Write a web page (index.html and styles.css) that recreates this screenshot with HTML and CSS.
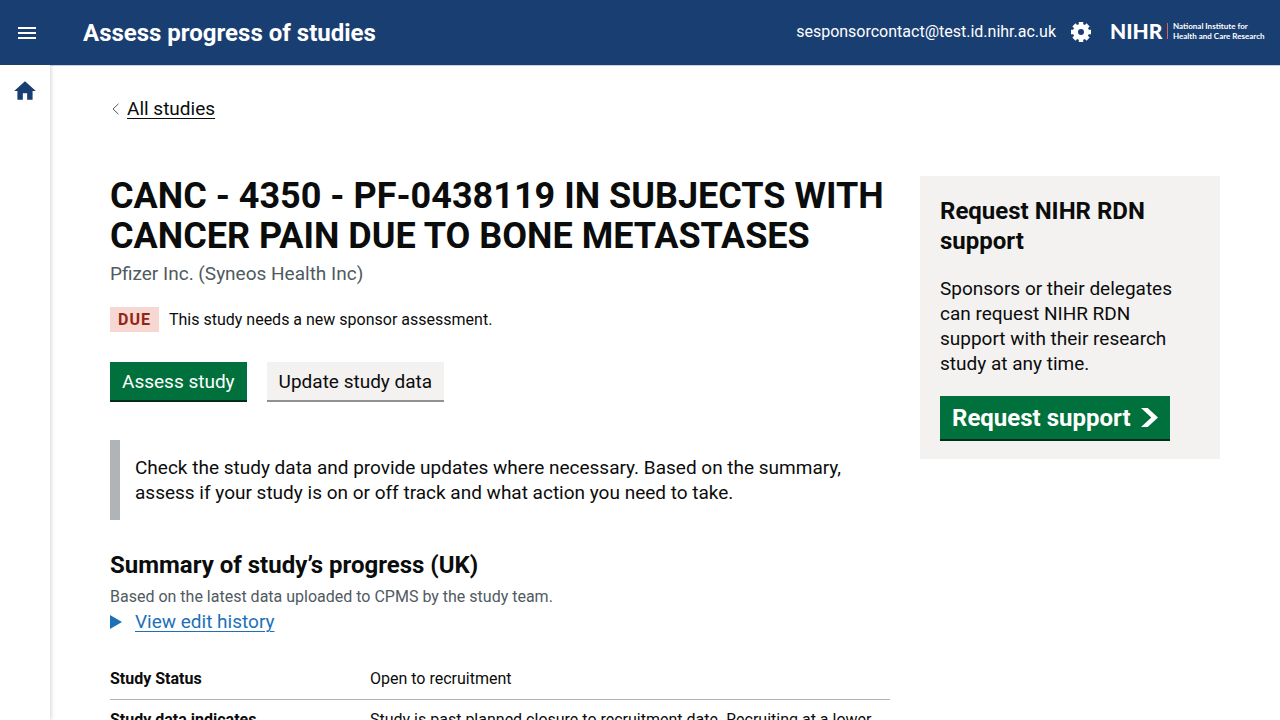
FILE: index.html
```html
<!DOCTYPE html>
<html lang="en">
<head>
<meta charset="utf-8">
<meta name="viewport" content="width=device-width, initial-scale=1">
<title>Assess progress of studies</title>
<link rel="stylesheet" href="styles.css">
</head>
<body>
<header class="header">
  <button class="menu-button" type="button" aria-label="Open navigation">
    <svg width="24" height="24" viewBox="0 0 24 24" fill="currentColor" aria-hidden="true"><path d="M3 18h18v-2H3v2zm0-5h18v-2H3v2zm0-7v2h18V6H3z"/></svg>
  </button>
  <div class="header-title">Assess progress of studies</div>
  <div class="header-account">
    <span class="header-email">sesponsorcontact@test.id.nihr.ac.uk</span>
    <button class="settings-button" type="button" aria-label="Settings">
      <svg width="24" height="24" viewBox="0 0 24 24" fill="none" stroke="currentColor" aria-hidden="true">
        <circle cx="12" cy="12" r="5.5" stroke-width="5"/>
        <path stroke-width="4.4" d="M12 2v3M12 19v3M2 12h3M19 12h3M4.900 4.900l2.100 2.100M17 17l2.100 2.100M4.900 19.100L7 17M17 7l2.100-2.100"/>
      </svg>
    </button>
    <a class="logo" href="#" aria-label="NIHR">
      <svg class="logo-image" width="156" height="20" viewBox="0 0 156 20" aria-hidden="true">
        <text class="logo-name" x="0" y="17">NIHR</text>
        <path d="M57 1h1v16h-1z" fill="#ea5d4e"/>
        <text class="logo-line" x="63" y="7">National Institute for</text>
        <text class="logo-line" x="63" y="17">Health and Care Research</text>
      </svg>
    </a>
  </div>
</header>
<div class="shell">
  <nav class="sidebar" aria-label="Main">
    <a class="home-link" href="#" aria-label="Home">
      <svg width="26" height="26" viewBox="0 0 24 24" fill="currentColor" aria-hidden="true"><path d="M10 20v-6h4v6h5v-8h3L12 3 2 12h3v8z"/></svg>
    </a>
  </nav>
  <div class="page">
    <div class="back">
      <svg width="7" height="12" viewBox="0 0 7 12" fill="none" stroke="#505a5f" aria-hidden="true"><path d="M6.500 .8L1 6l5.500 5.200"/></svg>
      <a class="back-link" href="#">All studies</a>
    </div>
    <div class="columns">
      <main>
        <h1 class="title">CANC - 4350 - PF-0438119 IN SUBJECTS WITH CANCER PAIN DUE TO BONE METASTASES</h1>
        <p class="organisation">Pfizer Inc. (Syneos Health Inc)</p>
        <div class="status"><strong class="tag">DUE</strong><span>This study needs a new sponsor assessment.</span></div>
        <div class="actions">
          <button class="button" type="button">Assess study</button>
          <button class="button button-secondary" type="button">Update study data</button>
        </div>
        <p class="inset">Check the study data and provide updates where necessary. Based on the summary, assess if your study is on or off track and what action you need to take.</p>
        <h2 class="heading">Summary of study’s progress (UK)</h2>
        <p class="hint">Based on the latest data uploaded to CPMS by the study team.</p>
        <details class="history">
          <summary class="history-summary">
            <svg width="12" height="14" viewBox="0 0 12 14" fill="currentColor" aria-hidden="true"><path d="M0 0l12 7-12 7z"/></svg>
            <span class="history-text">View edit history</span>
          </summary>
        </details>
        <table class="summary-table">
          <tbody>
            <tr><th scope="row">Study Status</th><td>Open to recruitment</td></tr>
            <tr><th scope="row">Study data indicates</th><td>Study is past planned closure to recruitment date. Recruiting at a lower</td></tr>
          </tbody>
        </table>
      </main>
      <aside class="support">
        <h2 class="heading">Request NIHR RDN support</h2>
        <p class="support-text">Sponsors or their delegates can request NIHR RDN support with their research study at any time.</p>
        <a class="button button-start" href="#">Request support
          <svg width="17" height="19" viewBox="0 0 33 40" preserveAspectRatio="none" fill="currentColor" aria-hidden="true"><path d="M0 0h13l20 20-20 20H0l20-20z"/></svg>
        </a>
      </aside>
    </div>
  </div>
</div>
</body>
</html>
```

FILE: styles.css
```css
* { box-sizing: border-box; }
html, body { height: 100%; }
body {
  margin: 0;
  display: flex;
  flex-direction: column;
  overflow: hidden;
  background: #fff;
  color: #0b0c0c;
  font: 19px/25px Roboto, Arial, sans-serif;
}
h1, h2, p { margin: 0; }
button { border: 0; padding: 0; font: inherit; cursor: pointer; }
svg { display: block; flex: none; }

.header {
  flex: none;
  display: flex;
  align-items: center;
  height: 65px;
  padding-right: 14px;
  background: #193e72;
  color: #fff;
}
.menu-button, .settings-button { background: none; color: inherit; }
.menu-button { margin-left: 15px; }
.header-title {
  margin-left: 44px;
  font-size: 24px;
  font-weight: 700;
  line-height: 30px;
}
.header-account {
  display: flex;
  align-items: center;
  margin-left: auto;
  padding-bottom: 2px;
}
.header-email { font-size: 16px; line-height: 20px; }
.settings-button { margin: 0 17px 0 13px; }
.logo { color: inherit; }
.logo-image { overflow: visible; }
.logo-name { font: 900 21px Lato, sans-serif; fill: #fff; }
.logo-line { font: 700 8px Lato, sans-serif; fill: #fff; }

.shell { flex: 1; display: flex; min-height: 0; }
.sidebar {
  flex: none;
  width: 50px;
  padding: 13px 12px;
  box-shadow: 0 0 5px rgba(0, 0, 0, .25);
  clip-path: inset(0 -8px 0 0);
}
.home-link { display: block; color: #193e72; }
.page {
  flex: 1;
  min-width: 0;
  padding: 30px 60px 0;
  border-top: 1px solid #c5d2e3;
}
.back { display: flex; align-items: center; gap: 8px; padding-left: 2px; }
.back-link {
  color: inherit;
  text-decoration-thickness: 1px;
  text-underline-offset: 3px;
}
.columns {
  display: grid;
  grid-template-columns: minmax(0, 1fr) 300px;
  gap: 30px;
  align-items: start;
  margin-top: 55px;
}
.title { font-size: 36px; line-height: 40px; font-weight: 700; }
.organisation { margin-top: 5px; color: #505a5f; }
.status {
  display: flex;
  align-items: center;
  gap: 10px;
  margin-top: 21px;
  font-size: 16px;
}
.tag {
  padding: 0 8px;
  background: #f6d7d2;
  color: #942514;
  letter-spacing: 1px;
}
.actions { display: flex; gap: 20px; margin-top: 30px; }
.button {
  height: 40px;
  padding: 0 12px 2px;
  background: #00703c;
  color: #fff;
  box-shadow: inset 0 -2px 0 #002d18;
}
.button-secondary {
  background: #f3f2f1;
  color: #0b0c0c;
  box-shadow: inset 0 -2px 0 #929191;
}
.inset {
  margin: 38px 0 30px;
  padding: 15px;
  border-left: 10px solid #b1b4b6;
}
.heading { font-size: 24px; line-height: 30px; font-weight: 700; }
.hint { margin-top: 7px; font-size: 16px; line-height: 20px; color: #505a5f; }
.history { margin-top: 2px; color: #1d70b8; }
.history-summary {
  display: flex;
  align-items: center;
  gap: 13px;
  width: fit-content;
  list-style: none;
  cursor: pointer;
}
.history-text {
  text-decoration: underline;
  text-decoration-thickness: 1px;
  text-underline-offset: 3px;
}
.summary-table {
  width: 100%;
  margin-top: 25px;
  border-collapse: collapse;
  font-size: 16px;
  line-height: 20px;
}
.summary-table th, .summary-table td {
  padding: 10px 10px 10px 0;
  border-bottom: 1px solid #b1b4b6;
  text-align: left;
  vertical-align: top;
}
.summary-table th { width: 260px; }

.support { padding: 20px 20px 18px; background: #f3f2f1; }
.support-text { margin-top: 20px; }
.button-start {
  display: flex;
  align-items: center;
  gap: 10px;
  width: fit-content;
  height: 45px;
  margin-top: 20px;
  font-size: 24px;
  font-weight: 700;
  line-height: 30px;
  text-decoration: none;
}
```
